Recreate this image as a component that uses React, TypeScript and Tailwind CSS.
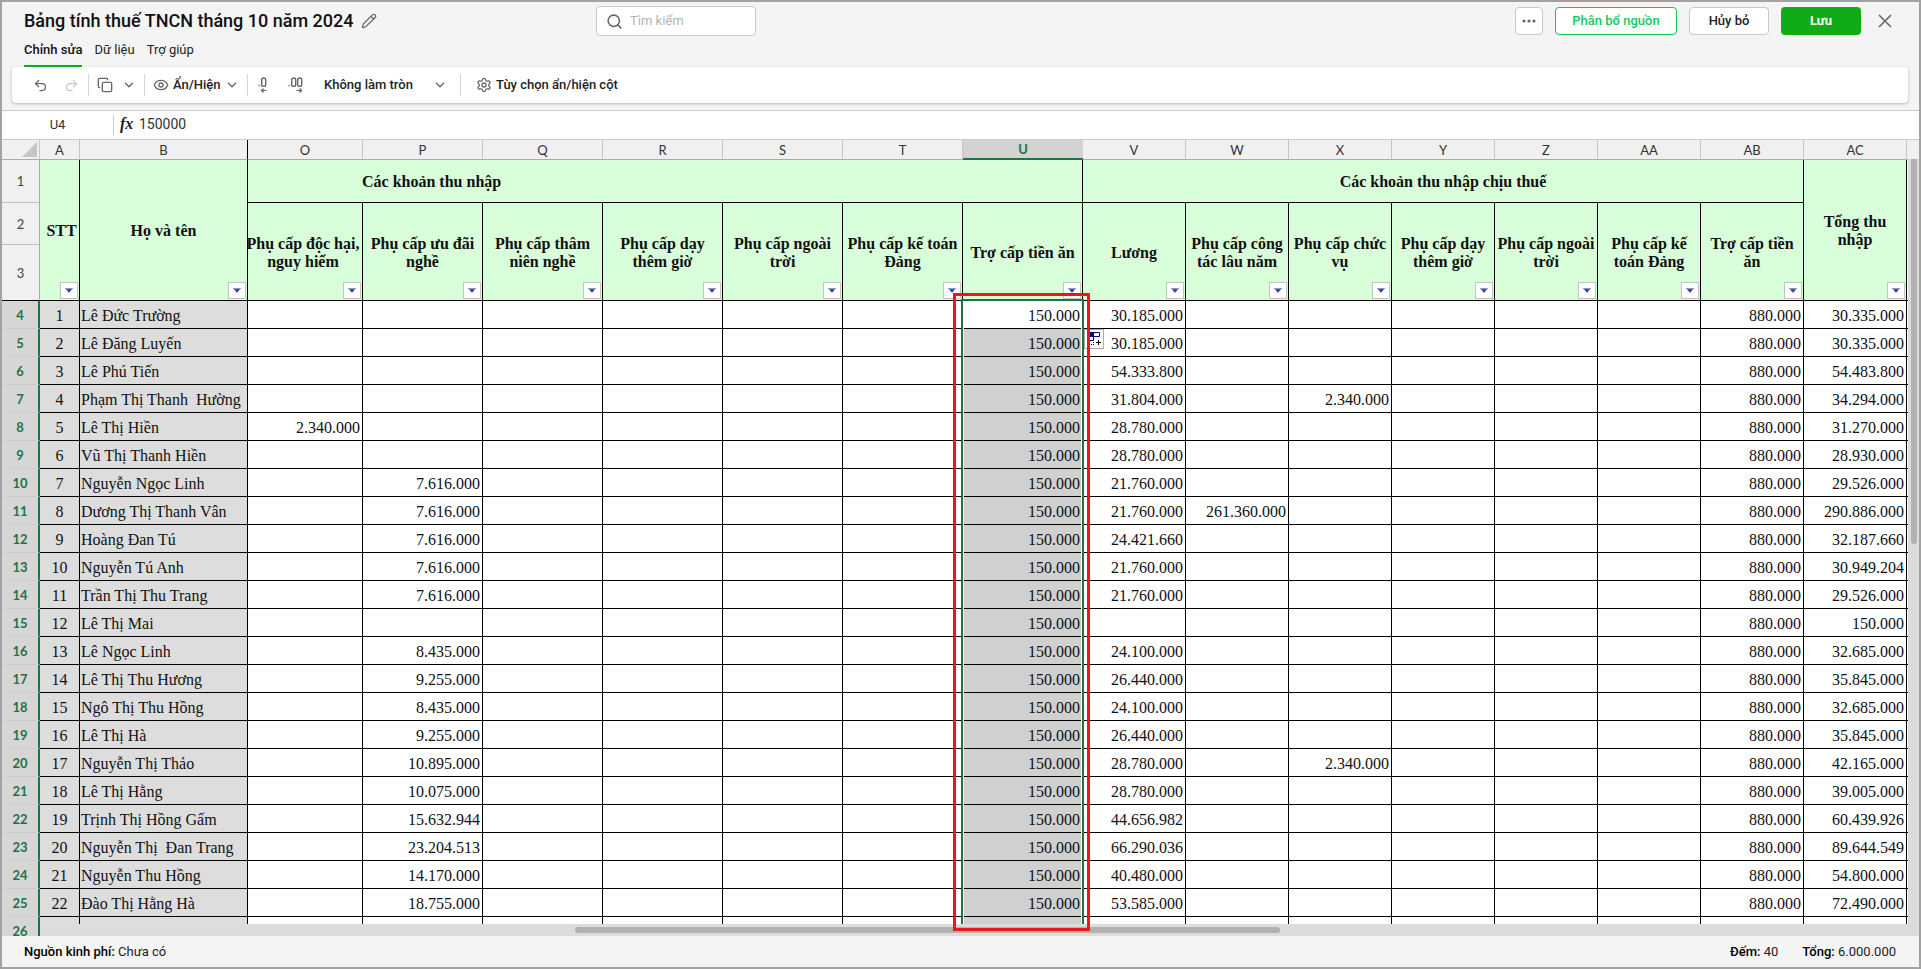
import React from 'react';
import { Pencil, Search, Undo2, Redo2, Copy, ChevronDown, Eye, Settings } from 'lucide-react';

const columns = [
  { id: 'O', width: 'w-[115px]', title: 'Phụ cấp độc hại, nguy hiểm' },
  { id: 'P', width: 'w-[120px]', title: 'Phụ cấp ưu đãi nghề' },
  { id: 'Q', width: 'w-[120px]', title: 'Phụ cấp thâm niên nghề' },
  { id: 'R', width: 'w-[120px]', title: 'Phụ cấp dạy thêm giờ' },
  { id: 'S', width: 'w-[120px]', title: 'Phụ cấp ngoài trời' },
  { id: 'T', width: 'w-[120px]', title: 'Phụ cấp kế toán Đảng' },
  { id: 'U', width: 'w-[120px]', title: 'Trợ cấp tiền ăn' },
  { id: 'V', width: 'w-[103px]', title: 'Lương' },
  { id: 'W', width: 'w-[103px]', title: 'Phụ cấp công tác lâu năm' },
  { id: 'X', width: 'w-[103px]', title: 'Phụ cấp chức vụ' },
  { id: 'Y', width: 'w-[103px]', title: 'Phụ cấp dạy thêm giờ' },
  { id: 'Z', width: 'w-[103px]', title: 'Phụ cấp ngoài trời' },
  { id: 'AA', width: 'w-[103px]', title: 'Phụ cấp kế toán Đảng' },
  { id: 'AB', width: 'w-[103px]', title: 'Trợ cấp tiền ăn' },
  { id: 'AC', width: 'w-[103px]', title: 'Tổng thu nhập' },
];

type Row = { name: string; V?: string; AC: string; [key: string]: string | undefined };

const rows: Row[] = [
  { name: 'Lê Đức Trường', V: '30.185.000', AC: '30.335.000' },
  { name: 'Lê Đăng Luyến', V: '30.185.000', AC: '30.335.000' },
  { name: 'Lê Phú Tiến', V: '54.333.800', AC: '54.483.800' },
  { name: 'Phạm Thị Thanh  Hường', V: '31.804.000', X: '2.340.000', AC: '34.294.000' },
  { name: 'Lê Thị Hiền', O: '2.340.000', V: '28.780.000', AC: '31.270.000' },
  { name: 'Vũ Thị Thanh Hiền', V: '28.780.000', AC: '28.930.000' },
  { name: 'Nguyễn Ngọc Linh', P: '7.616.000', V: '21.760.000', AC: '29.526.000' },
  { name: 'Dương Thị Thanh Vân', P: '7.616.000', V: '21.760.000', W: '261.360.000', AC: '290.886.000' },
  { name: 'Hoàng Đan Tú', P: '7.616.000', V: '24.421.660', AC: '32.187.660' },
  { name: 'Nguyễn Tú Anh', P: '7.616.000', V: '21.760.000', AC: '30.949.204' },
  { name: 'Trần Thị Thu Trang', P: '7.616.000', V: '21.760.000', AC: '29.526.000' },
  { name: 'Lê Thị Mai', AC: '150.000' },
  { name: 'Lê Ngọc Linh', P: '8.435.000', V: '24.100.000', AC: '32.685.000' },
  { name: 'Lê Thị Thu Hương', P: '9.255.000', V: '26.440.000', AC: '35.845.000' },
  { name: 'Ngô Thị Thu Hồng', P: '8.435.000', V: '24.100.000', AC: '32.685.000' },
  { name: 'Lê Thị Hà', P: '9.255.000', V: '26.440.000', AC: '35.845.000' },
  { name: 'Nguyễn Thị Thảo', P: '10.895.000', V: '28.780.000', X: '2.340.000', AC: '42.165.000' },
  { name: 'Lê Thị Hằng', P: '10.075.000', V: '28.780.000', AC: '39.005.000' },
  { name: 'Trịnh Thị Hồng Gấm', P: '15.632.944', V: '44.656.982', AC: '60.439.926' },
  { name: 'Nguyễn Thị  Đan Trang', P: '23.204.513', V: '66.290.036', AC: '89.644.549' },
  { name: 'Nguyễn Thu Hồng', P: '14.170.000', V: '40.480.000', AC: '54.800.000' },
  { name: 'Đào Thị Hằng Hà', P: '18.755.000', V: '53.585.000', AC: '72.490.000' },
];

const FilterButton: React.FC<{ label: string }> = ({ label }) => (
  <button
    aria-label={`Lọc ${label}`}
    className="absolute right-px bottom-px w-[18px] h-[17px] bg-white border border-[#c3c3c3] flex items-center justify-center"
  >
    <svg width="8" height="5" viewBox="0 0 8 5">
      <path d="M0 0h8L4 5z" fill="#444f7c" />
      <path d="M0 0h8L7 1H1z" fill="#8a9be0" />
    </svg>
  </button>
);

const Divider: React.FC = () => <div className="w-px h-[22px] bg-[#d5d5d5]" />;

const Header: React.FC = () => (
  <header className="bg-[#f4f4f4]">
    <div className="h-[38px] pl-[22px] pr-[27px] flex items-center">
      <div className="w-[572px] flex items-center gap-[7px]">
        <h1 className="text-[18px] leading-6 font-medium text-[#111] whitespace-nowrap">
          Bảng tính thuế TNCN tháng 10 năm 2024
        </h1>
        <button aria-label="Đổi tên">
          <Pencil size={16} strokeWidth={1.8} className="text-[#666]" />
        </button>
      </div>
      <label className="w-[160px] h-[30px] flex items-center gap-[7px] px-[9px] bg-white border border-[#c8c8c8] rounded-[4px]">
        <Search size={17} strokeWidth={2.2} className="shrink-0 text-[#666]" />
        <input
          type="text"
          aria-label="Tìm kiếm"
          placeholder="Tìm kiếm"
          className="w-full min-w-0 text-[13px] outline-none placeholder:text-[#b3b3b3]"
        />
      </label>
      <div className="ml-auto flex items-center gap-3 text-[13px]">
        <button aria-label="Thêm" className="w-7 h-7 flex items-center justify-center bg-white border border-[#c8c8c8] rounded-[4px]">
          <svg width="14" height="4" viewBox="0 0 14 4" fill="#666">
            <circle cx="2" cy="2" r="1.6" />
            <circle cx="7" cy="2" r="1.6" />
            <circle cx="12" cy="2" r="1.6" />
          </svg>
        </button>
        <button className="w-[122px] h-7 bg-white border border-[#14c95a] text-[#14c95a] font-medium rounded-[4px]">
          Phân bổ nguồn
        </button>
        <button className="w-20 h-7 bg-white border border-[#c8c8c8] text-[#222] font-medium rounded-[4px]">Hủy bỏ</button>
        <button className="w-20 h-7 bg-[#10ab16] text-white font-bold rounded-[4px]">Lưu</button>
        <button aria-label="Đóng" className="w-[19px] flex justify-end">
          <svg width="14" height="14" viewBox="0 0 14 14" stroke="#666" strokeWidth="1.6" fill="none">
            <path d="M1 1l12 12M13 1L1 13" />
          </svg>
        </button>
      </div>
    </div>
    <nav className="h-[27px] pl-[22px] flex gap-3 text-[13px] leading-5 text-[#222]">
      <a href="#edit" className="font-medium text-[#111] border-b-2 border-[#10ab16]">Chỉnh sửa</a>
      <a href="#data">Dữ liệu</a>
      <a href="#help">Trợ giúp</a>
    </nav>
    <div className="h-9 ml-[10px] mr-[11px] mb-[7px] pl-[21px] flex items-center bg-white rounded-[4px] shadow-[0_1px_3px_rgba(0,0,0,0.25)] text-[13px] font-medium text-[#222]">
      <button aria-label="Hoàn tác" className="w-[31px]">
        <Undo2 size={15} className="text-[#666]" />
      </button>
      <button aria-label="Làm lại" className="w-6">
        <Redo2 size={15} className="text-[#c8c8c8]" />
      </button>
      <Divider />
      <button aria-label="Sao chép" className="w-[55px] pl-2 flex items-center gap-[9px]">
        <Copy size={16} className="text-[#666]" />
        <ChevronDown size={14} strokeWidth={2.4} className="text-[#666]" />
      </button>
      <Divider />
      <button className="w-[102px] pl-2 flex items-center gap-1">
        <Eye size={16} className="text-[#666]" />
        Ẩn/Hiện
        <ChevronDown size={14} strokeWidth={2.4} className="text-[#666]" />
      </button>
      <Divider />
      <button aria-label="Giảm số thập phân" className="w-10 pl-[10px]">
        <svg width="10" height="18" viewBox="0 0 10 18" fill="none" stroke="#666" strokeWidth="1.4">
          <path d="M0.5 9.5h1.2" />
          <rect x="3.7" y="2" width="4" height="8.4" rx="2" />
          <path d="M8.5 14.5h-5M5.5 12.5l-2 2 2 2" strokeWidth="1.2" />
        </svg>
      </button>
      <button aria-label="Tăng số thập phân" className="w-9">
        <svg width="16" height="18" viewBox="0 0 16 18" fill="none" stroke="#666" strokeWidth="1.4">
          <path d="M0.5 9.5h1.2" />
          <rect x="3.7" y="2" width="4" height="8.4" rx="2" />
          <rect x="9.7" y="2" width="4" height="8.4" rx="2" />
          <path d="M8.5 14.5h5M11.5 12.5l2 2-2 2" strokeWidth="1.2" />
        </svg>
      </button>
      <div className="w-[136px] relative flex items-center">
        <select aria-label="Làm tròn" className="w-full appearance-none bg-transparent outline-none">
          <option>Không làm tròn</option>
        </select>
        <ChevronDown size={14} strokeWidth={2.4} className="absolute right-[13px] text-[#666] pointer-events-none" />
      </div>
      <Divider />
      <button className="pl-[15px] flex items-center gap-1">
        <Settings size={16} className="text-[#666]" />
        Tùy chọn ẩn/hiện cột
      </button>
    </div>
  </header>
);

const FormulaBar: React.FC = () => (
  <div className="h-[30px] flex items-center bg-white border-y border-[#cbcbcb] text-[14px] text-[#333]">
    <div className="w-[111px] text-center text-[13px]">U4</div>
    <div className="w-px h-5 bg-[#cbcbcb]" />
    <span className="w-[25px] pl-[6px] pb-[2px] font-['Liberation_Serif',serif] italic font-bold text-[16px] leading-5 text-[#222]">fx</span>
    <input aria-label="Công thức" defaultValue="150000" className="flex-1 pb-[2px] outline-none" />
  </div>
);

const groupCell = 'bg-[#d8ffda] border-r border-b border-black font-bold relative';

const Sheet: React.FC = () => (
  <div className="flex-1 min-h-0 relative">
    <div className="h-full flex overflow-hidden bg-[#dcdcdc]">
      <div className="flex-1 min-w-0">
        <table className="w-full table-fixed border-separate border-spacing-0 bg-white font-['Liberation_Serif',serif] text-[16px] leading-[18px] text-[#111]">
          <colgroup>
            <col className="w-[38px]" />
            <col className="w-[40px]" />
            <col className="w-[168px]" />
            {columns.map((col) => (
              <col key={col.id} className={col.width} />
            ))}
            <col />
          </colgroup>
          <thead>
            <tr className="h-5 bg-[#f0f0f0] font-[Lato,sans-serif] text-[13px] leading-[16px] text-[#333]">
              <th className="p-0 border-r border-b border-r-[#c6c6c6] border-b-[#ababab]">
                <svg width="15" height="15" viewBox="0 0 15 15" className="ml-auto mr-[2px]">
                  <path d="M15 0v15H0z" fill="#c6c6c6" />
                </svg>
              </th>
              <th className="p-0 font-normal border-r border-b border-r-[#c6c6c6] border-b-[#ababab]">A</th>
              <th className="p-0 font-normal border-r border-b border-r-black border-b-[#ababab]">B</th>
              {columns.map((col) => (
                <th
                  key={col.id}
                  className={
                    col.id === 'U'
                      ? 'p-0 bg-[#d3d3d3] font-bold text-[#217346] border-b-2 border-[#217346]'
                      : 'p-0 font-normal border-r border-b border-r-[#c6c6c6] border-b-[#ababab]'
                  }
                >
                  {col.id}
                </th>
              ))}
              <th className="p-0 border-b border-[#ababab]" />
            </tr>
            <tr className="h-[43px]">
              <RowNumber n={1} />
              <th rowSpan={3} className={`${groupCell} p-0 pt-[2px] pl-1`}>
                STT
                <FilterButton label="STT" />
              </th>
              <th rowSpan={3} className={`${groupCell} p-0 pt-[2px]`}>
                Họ và tên
                <FilterButton label="Họ và tên" />
              </th>
              <th colSpan={7} className={`${groupCell} p-0 pt-[2px] pl-[114px] text-left`}>Các khoản thu nhập</th>
              <th colSpan={7} className={`${groupCell} p-0 pt-[2px]`}>Các khoản thu nhập chịu thuế</th>
              <th rowSpan={3} className={`${groupCell} px-4 pb-0 pt-[2px]`}>
                Tổng thu nhập
                <FilterButton label="Tổng thu nhập" />
              </th>
              <td rowSpan={3} className="p-0 border-b border-black" />
            </tr>
            <tr className="h-[42px]">
              <RowNumber n={2} />
              {columns.slice(0, -1).map((col) => (
                <th key={col.id} rowSpan={2} className={`${groupCell} p-0 pt-[2px]`}>
                  <span className={col.id === 'O' ? 'block -ml-1' : ''}>{col.title}</span>
                  <FilterButton label={col.title} />
                </th>
              ))}
            </tr>
            <tr className="h-[56px]">
              <RowNumber n={3} />
            </tr>
          </thead>
          <tbody>
            {rows.map((row, i) => (
              <tr key={row.name} className="h-7">
                <SelectedRowNumber n={i + 4} />
                <td className="p-0 pt-[2px] bg-[#ddd] border-r border-b border-black text-center">{i + 1}</td>
                <td className="p-0 pt-[2px] pl-px bg-[#ddd] border-r border-b border-black whitespace-pre">{row.name}</td>
                {columns.map((col) => {
                  if (col.id === 'U') {
                    return (
                      <td key={col.id} className={`p-0 pt-[2px] pr-[2px] border-r border-b border-black text-right ${i > 0 ? 'bg-[#d0d0d0]' : ''}`}>
                        150.000
                      </td>
                    );
                  }
                  return (
                    <td key={col.id} className="p-0 pt-[2px] pr-[2px] border-r border-b border-black text-right">
                      {col.id === 'AB' ? '880.000' : row[col.id]}
                    </td>
                  );
                })}
                <td className="p-0 border-b border-black" />
              </tr>
            ))}
            <tr className="h-7">
              <SelectedRowNumber n={26} />
              <td className="p-0 bg-[#ddd] border-r border-black" />
              <td className="p-0 bg-[#ddd] border-r border-black" />
              {columns.map((col) => (
                <td key={col.id} className={`p-0 border-r border-black ${col.id === 'U' ? 'bg-[#d0d0d0]' : ''}`} />
              ))}
              <td />
            </tr>
          </tbody>
        </table>
      </div>
      <div className="w-[11px] flex flex-col">
        <div className="h-[19px] bg-[#f0f0f0]" />
        <div className="h-[385px] ml-[3px] mr-[2px] bg-[#b1b1b1] rounded-b-[3px]" />
      </div>
    </div>

    {/* selected range */}
    <div className="absolute left-[959px] top-[159px] w-[123px] bottom-3 border-2 border-b-0 border-[#217346]">
      <div className="h-full border-x border-white" />
    </div>

    {/* auto fill options */}
    <button aria-label="Tùy chọn tự điền" className="absolute left-[1082px] top-[189px] w-5 h-5 bg-white border border-[#ababab]">
      <svg width="18" height="18" viewBox="0 0 18 18" fill="none">
        <path d="M3 2h6v5H3z" fill="#00007f" />
        <path d="M8.5 2.5h6v4h-6zM3.5 6.500v4h5v-4" stroke="#00007f" />
        <path d="M6 14.5h1M8 14.5h1M8 12.5h1" stroke="#000" />
        <path d="M11 12.5h5M13.5 10v5" stroke="#000" />
      </svg>
    </button>

    {/* horizontal scroll bar */}
    <div className="absolute left-[38px] right-0 bottom-0 h-3 bg-[#dcdcdc] flex items-center">
      <div className="w-[705px] ml-[535px] h-[6px] bg-[#b1b1b1] rounded-full" />
    </div>

    {/* highlight frame */}
    <div className="absolute left-[951px] top-[153px] w-[137px] bottom-[5px] border-3 border-[#e8191c] pointer-events-none" />
  </div>
);

function RowNumber({ n }: { n: number }) {
  return (
    <th
      className={`p-0 bg-[#f0f0f0] font-[Lato,sans-serif] font-normal text-[13px] text-[#444] border-r border-b border-r-[#ababab] ${
        n === 3 ? 'border-b-black' : 'border-b-[#c0c0c0]'
      }`}
    >
      {n}
    </th>
  );
}

function SelectedRowNumber({ n }: { n: number }) {
  return (
    <th className="p-0 bg-[#d6d6d6] font-[Lato,sans-serif] font-bold text-[13px] text-[#217346] border-r-2 border-b border-r-[#217346] border-b-[#cecece]">
      {n}
    </th>
  );
}

export default function App() {
  return (
    <div className="h-screen flex flex-col overflow-hidden border-2 border-[#a2a2a2] bg-[#f4f4f4] font-[Roboto,sans-serif]">
      <Header />
      <FormulaBar />
      <Sheet />
      <footer className="h-[31px] pl-[22px] pr-[23px] flex items-center gap-6 text-[13px] text-[#222]">
        <div>
          <b className="font-medium text-black">Nguồn kinh phí:</b> Chưa có
        </div>
        <div className="ml-auto">
          <b className="font-medium text-black">Đếm:</b> 40
        </div>
        <div>
          <b className="font-medium text-black">Tổng:</b> 6.000.000
        </div>
      </footer>
    </div>
  );
}
